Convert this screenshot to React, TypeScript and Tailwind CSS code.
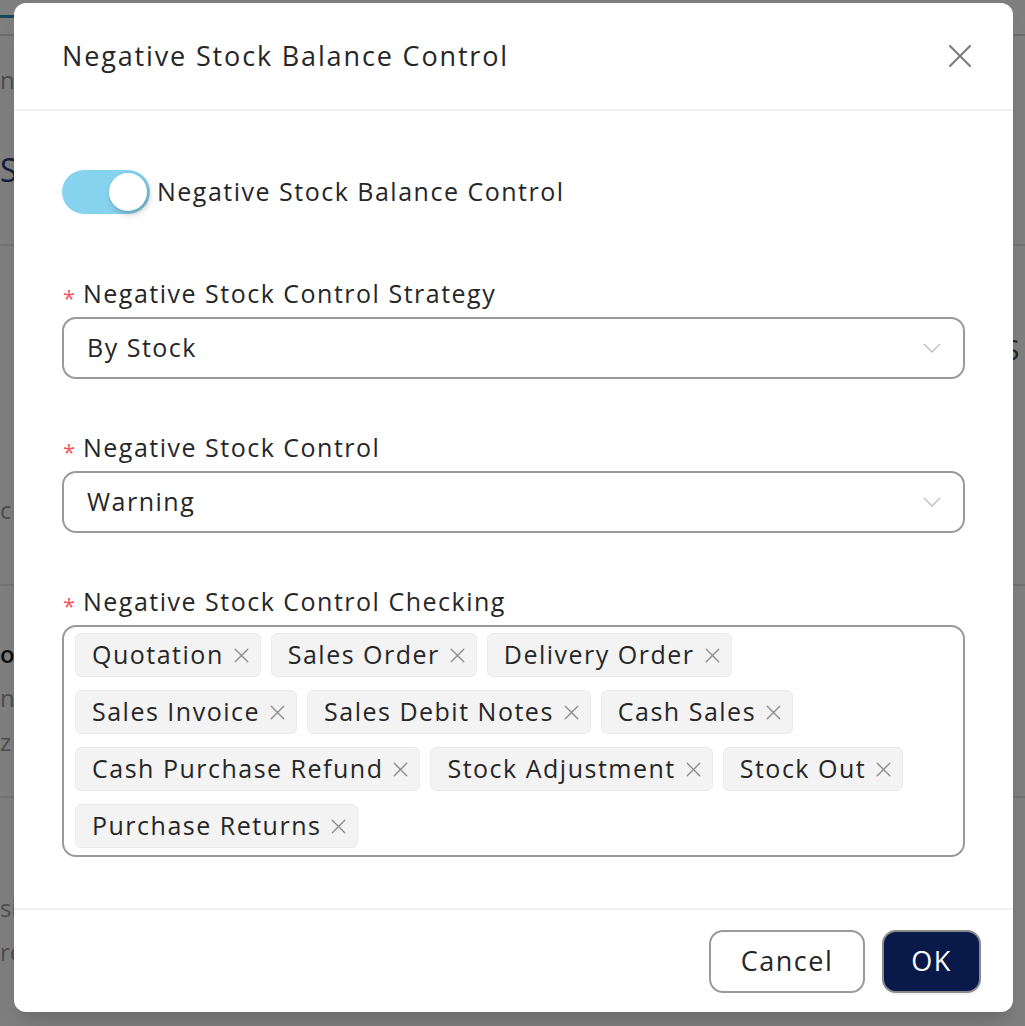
const tags = [
  'Quotation',
  'Sales Order',
  'Delivery Order',
  'Sales Invoice',
  'Sales Debit Notes',
  'Cash Sales',
  'Cash Purchase Refund',
  'Stock Adjustment',
  'Stock Out',
  'Purchase Returns',
];

const font = "font-['Open_Sans',sans-serif]";
const body = 'text-[25px] tracking-[1.5px] text-[#262626]';

function Cross({ size, color, width }: { size: number; color: string; width: number }) {
  return (
    <svg width={size} height={size} viewBox="0 0 24 24" fill="none" className="shrink-0">
      <path d="M2 2L22 22M22 2L2 22" stroke={color} strokeWidth={width} strokeLinecap="round" />
    </svg>
  );
}

function Label({ text }: { text: string }) {
  return (
    <div className="flex items-center h-[30px] mb-[8px]">
      <span className="text-[#f5555d] text-[22px] w-[21px] pl-[1px] leading-none pt-[6px]">*</span>
      <span className={body}>{text}</span>
    </div>
  );
}

function Select({ value }: { value: string }) {
  return (
    <div className="flex items-center justify-between h-[62px] border-2 border-[#9a9a9a] rounded-[14px] pl-[23px] pr-[22px]">
      <span className={body}>{value}</span>
      <svg width="18" height="10" viewBox="0 0 18 10" fill="none">
        <path d="M1 1L9 9L17 1" stroke="#bdbdbd" strokeWidth="1.3" />
      </svg>
    </div>
  );
}

function Background() {
  return (
    <div className="flex flex-col w-full h-full bg-white text-[24px] text-[#9a9a9a] whitespace-nowrap">
      <div className="h-[36px] border-b-2 border-[#d9d9d9] flex flex-col">
        <div className="h-[15px]" />
        <div className="h-[3px] w-[60px] bg-[#2f8fb0]" />
      </div>
      <div className="h-[210px] border-b-2 border-[#e5e5e5] flex flex-col">
        <div className="mt-[26px]">ne</div>
        <div className="mt-[48px] text-[32px] text-[#1f3f7a]">S</div>
      </div>
      <div className="h-[340px] border-b-2 border-[#e5e5e5] flex flex-col">
        <div className="mt-[82px] pl-[1004px] text-[28px] text-[#444]">S</div>
        <div className="mt-[122px]">c</div>
      </div>
      <div className="h-[212px] border-b-2 border-[#e5e5e5] flex flex-col">
        <div className="mt-[50px] text-[#1a1a1a] font-semibold">or</div>
        <div className="mt-[8px]">n</div>
        <div className="mt-[8px]">z</div>
      </div>
      <div className="flex flex-col">
        <div className="mt-[92px]">si</div>
        <div className="mt-[8px]">re</div>
      </div>
    </div>
  );
}

export default function App() {
  return (
    <div className={`relative w-full h-[1026px] overflow-hidden ${font}`}>
      <Background />
      <div className="absolute inset-0 bg-black/50 pl-[14px] pt-[3px]">
        <div className="w-[999px] h-[1009px] bg-white rounded-[12px] shadow-xl flex flex-col">
          <div className="h-[108px] border-b-2 border-[#f0f0f0] flex items-center justify-between pl-[48px] pr-[41px] shrink-0">
            <h2 className="text-[27px] font-medium text-[#262626] tracking-[1.85px]">
              Negative Stock Balance Control
            </h2>
            <Cross size={24} color="#7a7a7a" width={2} />
          </div>

          <div className="flex-1 px-[48px] pt-[58px] flex flex-col">
            <div className="flex items-center gap-[7px] h-[46px]">
              <div className="w-[88px] h-[44px] rounded-full bg-[#86d3ef] flex items-center justify-end pr-[3px]">
                <div className="w-[38px] h-[38px] rounded-full bg-white shadow-[2px_3px_6px_rgba(0,0,0,0.25)]" />
              </div>
              <span className={body}>Negative Stock Balance Control</span>
            </div>

            <div className="mt-[64px]">
              <Label text="Negative Stock Control Strategy" />
              <Select value="By Stock" />
            </div>

            <div className="mt-[54px]">
              <Label text="Negative Stock Control" />
              <Select value="Warning" />
            </div>

            <div className="mt-[54px]">
              <Label text="Negative Stock Control Checking" />
              <div className="h-[232px] border-2 border-[#9a9a9a] rounded-[14px] pl-[11px] pr-[11px] pt-[6px] flex flex-wrap content-start gap-x-[10px] gap-y-[13px]">
                {tags.map((t) => (
                  <div
                    key={t}
                    className="h-[44px] flex items-center bg-[#f3f3f3] border border-[#ebebeb] rounded-[6px] pl-[16px] pr-[11px] gap-[10px]"
                  >
                    <span className={body}>{t}</span>
                    <Cross size={15} color="#8c8c8c" width={2.2} />
                  </div>
                ))}
              </div>
            </div>
          </div>

          <div className="h-[104px] border-t-2 border-[#f0f0f0] flex items-start justify-end gap-[17px] pr-[32px] pt-[20px] shrink-0">
            <button className="w-[156px] h-[63px] border-2 border-[#9a9a9a] rounded-[14px] text-[27px] tracking-[1.5px] text-[#262626] bg-white">
              Cancel
            </button>
            <button className="w-[99px] h-[63px] border-2 border-[#8a8a8a] rounded-[14px] text-[27px] tracking-[1.5px] text-white bg-[#08194a] shadow-[0_2px_2px_rgba(0,0,0,0.05)]">
              OK
            </button>
          </div>
        </div>
      </div>
    </div>
  );
}
